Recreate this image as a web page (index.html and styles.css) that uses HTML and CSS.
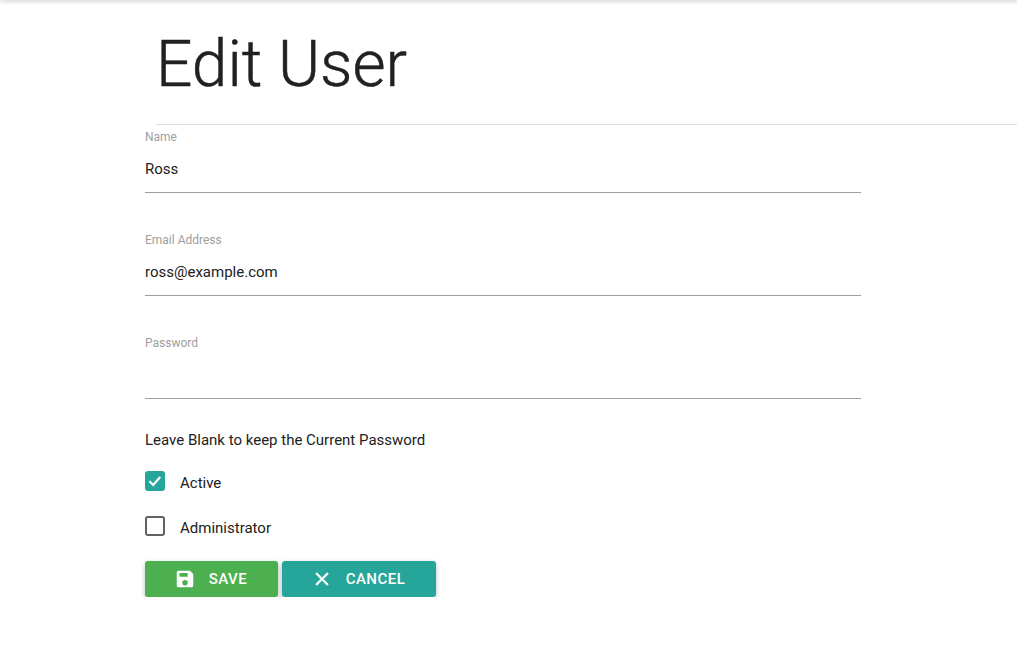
FILE: index.html
```html
<!DOCTYPE html>
<html lang="en">
<head>
    <meta charset="UTF-8">
    <meta name="viewport" content="width=device-width, initial-scale=1.0">
    <title>Edit User</title>
    <link rel="stylesheet" href="styles.css">
</head>
<body>
    <div class="topbar"></div>
    <div class="title-row">
        <h1 class="title">Edit User</h1>
    </div>
    <form class="form">
        <div class="field">
            <label class="field-label" for="name">Name</label>
            <input class="field-input" id="name" type="text" value="Ross">
        </div>
        <div class="field">
            <label class="field-label" for="email">Email Address</label>
            <input class="field-input" id="email" type="text" value="ross@example.com">
        </div>
        <div class="field">
            <label class="field-label" for="password">Password</label>
            <input class="field-input" id="password" type="password">
        </div>
        <p class="hint">Leave Blank to keep the Current Password</p>
        <div class="check-row">
            <span class="check checked">
                <svg viewBox="0 0 20 20" width="20" height="20"><path d="M4.4 10.2l3.8 3.8 7-8" fill="none" stroke="#fff" stroke-width="2.2"/></svg>
            </span>
            <span class="check-label">Active</span>
        </div>
        <div class="check-row">
            <span class="check"></span>
            <span class="check-label">Administrator</span>
        </div>
        <div class="actions">
            <button class="btn btn-save" type="button">
                <svg viewBox="0 0 24 24" width="22" height="22"><path fill="#fff" fill-rule="evenodd" d="M5 3h11.6c.5 0 1 .2 1.4.6l2.4 2.4c.4.4.6.9.6 1.4V19a2 2 0 0 1-2 2H5a2 2 0 0 1-2-2V5a2 2 0 0 1 2-2zm1.5 2.5a.5.5 0 0 0-.5.5v3a.5.5 0 0 0 .5.5h8a.5.5 0 0 0 .5-.5V6a.5.5 0 0 0-.5-.5h-8zM12 13a3 3 0 1 0 0 6 3 3 0 0 0 0-6z"/></svg>
                SAVE
            </button>
            <button class="btn btn-cancel" type="button">
                <svg viewBox="0 0 24 24" width="22" height="22"><path fill="#fff" stroke="#fff" stroke-width="0.5" d="M19 6.41L17.59 5 12 10.59 6.41 5 5 6.41 10.59 12 5 17.59 6.41 19 12 13.41 17.59 19 19 17.59 13.41 12z"/></svg>
                CANCEL
            </button>
        </div>
    </form>
</body>
</html>
```

FILE: styles.css
```css
body {
    margin: 0;
    background: #fff;
    color: #212121;
    font-family: Roboto, Arial, sans-serif;
}
.topbar {
    height: 0;
    box-shadow: 0 0 4px 1px rgba(0, 0, 0, 0.3);
}
.title-row {
    height: 124px;
    margin-left: 156px;
    border-bottom: 1px solid #e0e0e0;
}
.title {
    margin: 0;
    padding-top: 29px;
    font-size: 64px;
    line-height: 72px;
    font-weight: 300;
    -webkit-text-stroke: 0.5px #212121;
}
.form {
    width: 716px;
    margin-left: 145px;
}
.field {
    height: 94px;
}
.field + .field {
    margin-top: 9px;
}
.field-label {
    display: block;
    padding-top: 5px;
    font-size: 12px;
    line-height: 14px;
    color: #9e9e9e;
}
.field-input {
    display: block;
    width: 100%;
    height: 49px;
    padding: 2px 0 0;
    box-sizing: border-box;
    border: none;
    border-bottom: 1px solid #9e9e9e;
    outline: none;
    background: none;
    color: #212121;
    font-family: inherit;
    font-size: 15px;
}
.hint {
    margin: 0 0 8px;
    padding-top: 5px;
    font-size: 15px;
    line-height: 20px;
    color: #212121;
}
.check-row {
    display: flex;
    align-items: center;
    height: 45px;
}
.check {
    width: 20px;
    height: 20px;
    box-sizing: border-box;
    border: 2px solid #616161;
    border-radius: 3px;
}
.check.checked {
    border: none;
    background: #26a69a;
}
.check svg {
    display: block;
}
.check-label {
    margin-left: 15px;
    padding-top: 4px;
    font-size: 15px;
    color: #212121;
}
.actions {
    display: flex;
    gap: 4px;
    margin-top: 13px;
}
.btn {
    display: flex;
    align-items: center;
    justify-content: center;
    gap: 13px;
    height: 36px;
    padding: 0 2px 0 0;
    border: none;
    border-radius: 3px;
    color: #fff;
    font-family: inherit;
    font-size: 15px;
    font-weight: 500;
    letter-spacing: 0.5px;
    box-shadow: 0 2px 5px 0 rgba(0, 0, 0, 0.26);
}
.btn-save {
    width: 133px;
    background: #4caf50;
}
.btn-cancel {
    width: 154px;
    background: #26a69a;
}
```
